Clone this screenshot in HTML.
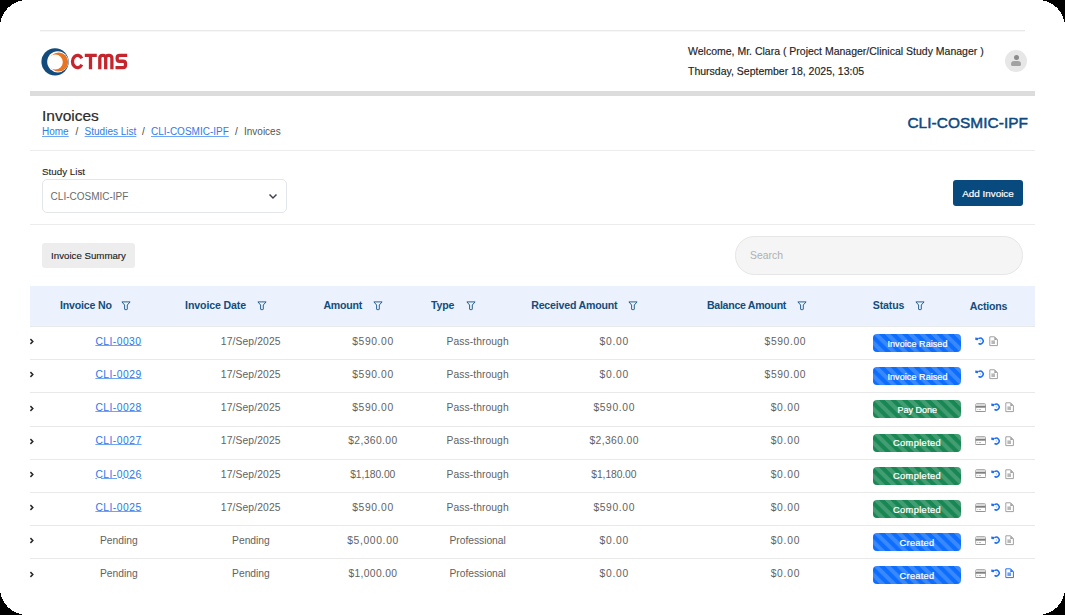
<!DOCTYPE html>
<html><head><meta charset="utf-8">
<style>
*{margin:0;padding:0;box-sizing:border-box}
html,body{width:1065px;height:615px;overflow:hidden;background:#000}
body{font-family:"Liberation Sans",sans-serif;color:#333}
#page{position:absolute;left:0;top:0;width:1065px;height:615px;background:#fff;overflow:hidden}
.a{position:absolute;white-space:nowrap}
.line{position:absolute;height:1px;background:#ececec}
.logo{position:absolute;left:40px;top:47px}
.hdr{font-size:10.5px;color:#222;-webkit-text-stroke:0.15px #222}
.crumb{font-size:10px;color:#555}
.crumb a{color:#2f7be6;text-decoration:underline;text-decoration-color:#6fa5f3;text-underline-offset:1px}
.crumb.sep{color:#444}
.th{position:absolute;top:286px;height:41px;left:30px;width:1005px;background:#ebf2fd;border-bottom:1px solid #e8eaea}
.thl{color:#134d7b}
.fil{position:absolute;top:301px;width:9px;height:9px}
.row{position:absolute;left:30px;width:1005px;height:34px;border-bottom:1px solid #e9e9e9}
.cell{color:#626262}
.lnk{color:#2a77ec;text-decoration:underline;text-decoration-color:#6fa5f3;text-underline-offset:0.4px}
.btxt{color:#fff;-webkit-text-stroke:0.22px #fff}
.badge{position:absolute;left:873px;width:88px;height:18px;border-radius:4px;
 background-image:linear-gradient(45deg,rgba(255,255,255,.18) 25%,transparent 25%,transparent 50%,rgba(255,255,255,.18) 50%,rgba(255,255,255,.18) 75%,transparent 75%,transparent);
 background-size:11.5px 11.5px;background-position:0.6px 0}
.blue{background-color:#0d6efd}
.green{background-color:#198754}
.ic{position:absolute}
</style></head>
<body>
<div id="page">
  <!-- header -->
  <div class="line" style="left:40px;top:30px;width:985px;background:#e9e9e9;box-shadow:0 1px 0 #f7f7f7"></div>
  <svg class="a" style="left:0;top:0" width="140" height="90" viewBox="0 0 140 90">
    <circle cx="55.05" cy="61.8" r="13.65" fill="#134b7d"/>
    <circle cx="57.8" cy="61.8" r="10.6" fill="#fff"/>
    <circle cx="58.65" cy="61.95" r="9.55" fill="#e97424"/>
    <circle cx="55.3" cy="61.95" r="7.5" fill="#fff"/>
    <g fill="none" stroke="#c5252d" stroke-width="3.3">
      <path d="M81.8 58.4 A5 6.15 0 1 0 81.8 64.6"/>
      <path d="M84.8 55.35 H96.8 M90.5 55.35 V69.3"/>
      <path d="M99.8 69.3 V58.3 Q99.8 55.35 102.6 55.35 H103 Q105.7 55.35 105.7 58.3 V69.3 M105.7 58.3 Q105.7 55.35 108.5 55.35 H109 Q111.9 55.35 111.9 58.3 V69.3"/>
      <path d="M127.2 55.35 H119.6 Q117.15 55.35 117.15 57.9 V58.7 Q117.15 61.25 119.6 61.25 H123 Q125.55 61.25 125.55 63.8 V65.1 Q125.55 67.65 123 67.65 H115.5"/>
    </g>
  </svg>
  <div class="a hdr" style="left:688px;top:45px">Welcome, Mr. Clara ( Project Manager/Clinical Study Manager )</div>
  <div class="a hdr" style="left:688px;top:65px">Thursday, September 18, 2025, 13:05</div>
  <div class="a" style="left:1005px;top:50px;width:22px;height:22px;border-radius:50%;background:#e7e7e7">
    <div style="position:absolute;left:8.5px;top:4.5px;width:5px;height:5px;border-radius:50%;background:#8c8c8c"></div>
    <div style="position:absolute;left:6px;top:11px;width:10px;height:5px;border-radius:5px 5px 3px 3px;background:#a2a2a2"></div>
  </div>
  <div class="a" style="left:30px;top:91px;width:1005px;height:5px;background:#dcdcdc"></div>

  <!-- title -->
  <div class="a" style="left:42px;top:107px;font-size:15.5px;color:#2b2b2b;-webkit-text-stroke:0.2px #2b2b2b">Invoices</div>
  <div class="a crumb" style="left:42px;top:126px"><a>Home</a></div>
  <div class="a crumb sep" style="left:75.5px;top:126px">/</div>
  <div class="a crumb" style="left:84.6px;top:126px"><a>Studies List</a></div>
  <div class="a crumb sep" style="left:142px;top:126px">/</div>
  <div class="a crumb" style="left:151px;top:126px"><a>CLI-COSMIC-IPF</a></div>
  <div class="a crumb sep" style="left:235px;top:126px">/</div>
  <div class="a crumb" style="left:244px;top:126px">Invoices</div>
  <div class="a" style="left:907.4px;top:114px;font-size:15.4px;font-weight:400;color:#0d4a80;letter-spacing:0.07px;-webkit-text-stroke:0.5px #0d4a80">CLI-COSMIC-IPF</div>
  <div class="line" style="left:30px;top:150px;width:1005px"></div>

  <!-- filter row -->
  <div class="a" style="left:42px;top:166px;font-size:9.8px;color:#262626;-webkit-text-stroke:0.12px #262626">Study List</div>
  <div class="a" style="left:42px;top:179px;width:245px;height:34px;border:1px solid #e2e5ea;border-radius:5px">
    <div class="a" style="left:7.6px;top:11px;font-size:10px;color:#6a6a6a">CLI-COSMIC-IPF</div>
    <svg class="ic" style="left:224.6px;top:12.6px" width="10" height="8" viewBox="0 0 10 8"><path d="M1.5 1.6 L5 5 L8.5 1.6" fill="none" stroke="#3d4350" stroke-width="1.45"/></svg>
  </div>
  <div class="a" style="left:953px;top:180px;width:70px;height:26px;border-radius:3px;background:#084a7e;color:#fff;font-size:9.9px;text-align:center;line-height:27.5px;-webkit-text-stroke:0.2px #fff">Add Invoice</div>
  <div class="line" style="left:30px;top:224px;width:1005px"></div>

  <!-- summary / search -->
  <div class="a" style="left:42px;top:243px;width:93px;height:25px;border-radius:3px;background:#ededed;color:#1a1a1a;-webkit-text-stroke:0.12px #1a1a1a;font-size:9.7px;text-align:center;line-height:25px">Invoice Summary</div>
  <div class="a" style="left:735px;top:236px;width:288px;height:38.5px;border-radius:19.25px;background:#f5f5f5;border:1px solid #e6e6e6">
    <div class="a" style="left:14px;top:13px;font-size:10.4px;color:#b0b0b0">Search</div>
  </div>

  <!-- table header -->
  <div class="th"></div>
  <div id="thead"><div class="a thl" style="left:59.90px;top:299.93px;font-size:10.6px;line-height:10.6px;font-weight:700;letter-spacing:-0.169px;">Invoice No</div>
<svg class="ic" style="left:120.69999999999999px;top:300px" width="10" height="11" viewBox="0 0 10 11"><path d="M0.9 1.9 H9.1 L6.3 5.0 V9.1 Q6.3 9.6 5.8 9.6 H4.1 Q3.6 9.6 3.6 9.1 V5.0 Z" fill="none" stroke="#1d5a8c" stroke-width="0.95" stroke-linejoin="round"/></svg>
<div class="a thl" style="left:185.10px;top:299.93px;font-size:10.6px;line-height:10.6px;font-weight:700;letter-spacing:-0.123px;">Invoice Date</div>
<svg class="ic" style="left:256.6px;top:300px" width="10" height="11" viewBox="0 0 10 11"><path d="M0.9 1.9 H9.1 L6.3 5.0 V9.1 Q6.3 9.6 5.8 9.6 H4.1 Q3.6 9.6 3.6 9.1 V5.0 Z" fill="none" stroke="#1d5a8c" stroke-width="0.95" stroke-linejoin="round"/></svg>
<div class="a thl" style="left:323.40px;top:299.93px;font-size:10.6px;line-height:10.6px;font-weight:700;letter-spacing:-0.241px;">Amount</div>
<svg class="ic" style="left:373.3px;top:300px" width="10" height="11" viewBox="0 0 10 11"><path d="M0.9 1.9 H9.1 L6.3 5.0 V9.1 Q6.3 9.6 5.8 9.6 H4.1 Q3.6 9.6 3.6 9.1 V5.0 Z" fill="none" stroke="#1d5a8c" stroke-width="0.95" stroke-linejoin="round"/></svg>
<div class="a thl" style="left:430.90px;top:299.93px;font-size:10.6px;line-height:10.6px;font-weight:700;letter-spacing:-0.119px;">Type</div>
<svg class="ic" style="left:465.6px;top:300px" width="10" height="11" viewBox="0 0 10 11"><path d="M0.9 1.9 H9.1 L6.3 5.0 V9.1 Q6.3 9.6 5.8 9.6 H4.1 Q3.6 9.6 3.6 9.1 V5.0 Z" fill="none" stroke="#1d5a8c" stroke-width="0.95" stroke-linejoin="round"/></svg>
<div class="a thl" style="left:531.20px;top:299.93px;font-size:10.6px;line-height:10.6px;font-weight:700;letter-spacing:-0.193px;">Received Amount</div>
<svg class="ic" style="left:627.8000000000001px;top:300px" width="10" height="11" viewBox="0 0 10 11"><path d="M0.9 1.9 H9.1 L6.3 5.0 V9.1 Q6.3 9.6 5.8 9.6 H4.1 Q3.6 9.6 3.6 9.1 V5.0 Z" fill="none" stroke="#1d5a8c" stroke-width="0.95" stroke-linejoin="round"/></svg>
<div class="a thl" style="left:707.00px;top:299.93px;font-size:10.6px;line-height:10.6px;font-weight:700;letter-spacing:-0.293px;">Balance Amount</div>
<svg class="ic" style="left:796.6px;top:300px" width="10" height="11" viewBox="0 0 10 11"><path d="M0.9 1.9 H9.1 L6.3 5.0 V9.1 Q6.3 9.6 5.8 9.6 H4.1 Q3.6 9.6 3.6 9.1 V5.0 Z" fill="none" stroke="#1d5a8c" stroke-width="0.95" stroke-linejoin="round"/></svg>
<div class="a thl" style="left:872.80px;top:299.93px;font-size:10.6px;line-height:10.6px;font-weight:700;letter-spacing:-0.140px;">Status</div>
<svg class="ic" style="left:915.0px;top:300px" width="10" height="11" viewBox="0 0 10 11"><path d="M0.9 1.9 H9.1 L6.3 5.0 V9.1 Q6.3 9.6 5.8 9.6 H4.1 Q3.6 9.6 3.6 9.1 V5.0 Z" fill="none" stroke="#1d5a8c" stroke-width="0.95" stroke-linejoin="round"/></svg>
<div class="a thl" style="left:969.80px;top:301.23px;font-size:10.6px;line-height:10.6px;font-weight:700;letter-spacing:-0.212px;">Actions</div>
<div class="row" style="top:327.00px;height:33.20px"></div>
<svg class="ic" style="left:29px;top:338.20px" width="6" height="7" viewBox="0 0 6 7"><path d="M1.4 1.1 L3.8 3.5 L1.4 5.9" fill="none" stroke="#262626" stroke-width="1.5"/></svg>
<div class="a cell lnk" style="left:95.40px;top:336.78px;font-size:10.3px;line-height:10.3px;font-weight:400;letter-spacing:0.465px;">CLI-0030</div>
<div class="a cell" style="left:220.85px;top:336.78px;font-size:10.3px;line-height:10.3px;font-weight:400;letter-spacing:0.121px;">17/Sep/2025</div>
<div class="a cell" style="left:352.25px;top:336.78px;font-size:10.3px;line-height:10.3px;font-weight:400;letter-spacing:0.616px;">$590.00</div>
<div class="a cell" style="left:446.60px;top:336.78px;font-size:10.3px;line-height:10.3px;font-weight:400;letter-spacing:0.070px;">Pass-through</div>
<div class="a cell" style="left:599.55px;top:336.78px;font-size:10.3px;line-height:10.3px;font-weight:400;letter-spacing:0.738px;">$0.00</div>
<div class="a cell" style="left:764.55px;top:336.78px;font-size:10.3px;line-height:10.3px;font-weight:400;letter-spacing:0.616px;">$590.00</div>
<div class="badge blue" style="top:334.00px"></div>
<div class="a btxt" style="left:887.45px;top:339.88px;font-size:9.0px;line-height:9.0px;font-weight:400;letter-spacing:0.075px;">Invoice Raised</div>
<svg class="ic" style="left:975.1px;top:336.00px" width="10" height="10" viewBox="0 0 10 10"><path d="M3.6 2.6 A2.95 2.95 0 1 1 3.5 7.46" fill="none" stroke="#1f6ff2" stroke-width="1.55"/><path d="M0.2 1.6 L3.9 1.9 L2.7 4.3 L0.4 4.1 Z" fill="#1f6ff2"/><path d="M5.3 4.0 V5.4 L6.1 6" fill="none" stroke="#1f6ff2" stroke-width="0.8" opacity="0.4"/></svg>
<svg class="ic" style="left:989.2px;top:335.80px" width="10" height="11" viewBox="0 0 10 11"><path d="M0.8 0.8 H5.6 L8.4 3.6 V9.6 H0.8 Z" fill="#fff" stroke="#a0a0a0" stroke-width="1" stroke-linejoin="round"/><path d="M5.3 0.8 V3.9 H8.4 Z" fill="#a0a0a0"/><rect x="2.4" y="4.4" width="3.6" height="3.6" fill="#b8b8b8"/></svg>
<div class="row" style="top:360.20px;height:33.20px"></div>
<svg class="ic" style="left:29px;top:371.40px" width="6" height="7" viewBox="0 0 6 7"><path d="M1.4 1.1 L3.8 3.5 L1.4 5.9" fill="none" stroke="#262626" stroke-width="1.5"/></svg>
<div class="a cell lnk" style="left:95.40px;top:369.98px;font-size:10.3px;line-height:10.3px;font-weight:400;letter-spacing:0.480px;">CLI-0029</div>
<div class="a cell" style="left:220.85px;top:369.98px;font-size:10.3px;line-height:10.3px;font-weight:400;letter-spacing:0.121px;">17/Sep/2025</div>
<div class="a cell" style="left:352.25px;top:369.98px;font-size:10.3px;line-height:10.3px;font-weight:400;letter-spacing:0.616px;">$590.00</div>
<div class="a cell" style="left:446.60px;top:369.98px;font-size:10.3px;line-height:10.3px;font-weight:400;letter-spacing:0.070px;">Pass-through</div>
<div class="a cell" style="left:599.55px;top:369.98px;font-size:10.3px;line-height:10.3px;font-weight:400;letter-spacing:0.738px;">$0.00</div>
<div class="a cell" style="left:764.55px;top:369.98px;font-size:10.3px;line-height:10.3px;font-weight:400;letter-spacing:0.616px;">$590.00</div>
<div class="badge blue" style="top:367.20px"></div>
<div class="a btxt" style="left:887.45px;top:373.08px;font-size:9.0px;line-height:9.0px;font-weight:400;letter-spacing:0.075px;">Invoice Raised</div>
<svg class="ic" style="left:975.1px;top:369.20px" width="10" height="10" viewBox="0 0 10 10"><path d="M3.6 2.6 A2.95 2.95 0 1 1 3.5 7.46" fill="none" stroke="#1f6ff2" stroke-width="1.55"/><path d="M0.2 1.6 L3.9 1.9 L2.7 4.3 L0.4 4.1 Z" fill="#1f6ff2"/><path d="M5.3 4.0 V5.4 L6.1 6" fill="none" stroke="#1f6ff2" stroke-width="0.8" opacity="0.4"/></svg>
<svg class="ic" style="left:989.2px;top:369.00px" width="10" height="11" viewBox="0 0 10 11"><path d="M0.8 0.8 H5.6 L8.4 3.6 V9.6 H0.8 Z" fill="#fff" stroke="#a0a0a0" stroke-width="1" stroke-linejoin="round"/><path d="M5.3 0.8 V3.9 H8.4 Z" fill="#a0a0a0"/><rect x="2.4" y="4.4" width="3.6" height="3.6" fill="#b8b8b8"/></svg>
<div class="row" style="top:393.40px;height:33.20px"></div>
<svg class="ic" style="left:29px;top:404.60px" width="6" height="7" viewBox="0 0 6 7"><path d="M1.4 1.1 L3.8 3.5 L1.4 5.9" fill="none" stroke="#262626" stroke-width="1.5"/></svg>
<div class="a cell lnk" style="left:95.40px;top:403.18px;font-size:10.3px;line-height:10.3px;font-weight:400;letter-spacing:0.480px;">CLI-0028</div>
<div class="a cell" style="left:220.85px;top:403.18px;font-size:10.3px;line-height:10.3px;font-weight:400;letter-spacing:0.121px;">17/Sep/2025</div>
<div class="a cell" style="left:352.25px;top:403.18px;font-size:10.3px;line-height:10.3px;font-weight:400;letter-spacing:0.616px;">$590.00</div>
<div class="a cell" style="left:446.60px;top:403.18px;font-size:10.3px;line-height:10.3px;font-weight:400;letter-spacing:0.070px;">Pass-through</div>
<div class="a cell" style="left:593.45px;top:403.18px;font-size:10.3px;line-height:10.3px;font-weight:400;letter-spacing:0.616px;">$590.00</div>
<div class="a cell" style="left:770.65px;top:403.18px;font-size:10.3px;line-height:10.3px;font-weight:400;letter-spacing:0.738px;">$0.00</div>
<div class="badge green" style="top:400.40px"></div>
<div class="a btxt" style="left:897.45px;top:406.28px;font-size:9.0px;line-height:9.0px;font-weight:400;letter-spacing:-0.003px;">Pay Done</div>
<svg class="ic" style="left:975px;top:403.00px" width="11" height="9" viewBox="0 0 11 9"><rect x="0.7" y="0.6" width="9.8" height="8" rx="0.9" fill="#fff" stroke="#a8a8a8" stroke-width="1"/><rect x="1.2" y="1.1" width="8.8" height="1.9" fill="#d6d6d6"/><rect x="0.7" y="3" width="9.8" height="1.7" fill="#7f7f7f"/><rect x="2" y="6.1" width="1.3" height="1" fill="#ccc"/><rect x="4" y="6.1" width="2" height="1" fill="#bbb"/><path d="M0.7 8.6 H10.5" stroke="#8c8c8c" stroke-width="0.9"/></svg>
<svg class="ic" style="left:990.9px;top:402.40px" width="10" height="10" viewBox="0 0 10 10"><path d="M3.6 2.6 A2.95 2.95 0 1 1 3.5 7.46" fill="none" stroke="#1f6ff2" stroke-width="1.55"/><path d="M0.2 1.6 L3.9 1.9 L2.7 4.3 L0.4 4.1 Z" fill="#1f6ff2"/><path d="M5.3 4.0 V5.4 L6.1 6" fill="none" stroke="#1f6ff2" stroke-width="0.8" opacity="0.4"/></svg>
<svg class="ic" style="left:1004.8px;top:402.40px" width="10" height="11" viewBox="0 0 10 11"><path d="M0.8 0.8 H5.6 L8.4 3.6 V9.6 H0.8 Z" fill="#fff" stroke="#a0a0a0" stroke-width="1" stroke-linejoin="round"/><path d="M5.3 0.8 V3.9 H8.4 Z" fill="#a0a0a0"/><rect x="2.4" y="4.4" width="3.6" height="3.6" fill="#b8b8b8"/></svg>
<div class="row" style="top:426.60px;height:33.20px"></div>
<svg class="ic" style="left:29px;top:437.80px" width="6" height="7" viewBox="0 0 6 7"><path d="M1.4 1.1 L3.8 3.5 L1.4 5.9" fill="none" stroke="#262626" stroke-width="1.5"/></svg>
<div class="a cell lnk" style="left:95.40px;top:436.38px;font-size:10.3px;line-height:10.3px;font-weight:400;letter-spacing:0.480px;">CLI-0027</div>
<div class="a cell" style="left:220.85px;top:436.38px;font-size:10.3px;line-height:10.3px;font-weight:400;letter-spacing:0.121px;">17/Sep/2025</div>
<div class="a cell" style="left:348.20px;top:436.38px;font-size:10.3px;line-height:10.3px;font-weight:400;letter-spacing:0.401px;">$2,360.00</div>
<div class="a cell" style="left:446.60px;top:436.38px;font-size:10.3px;line-height:10.3px;font-weight:400;letter-spacing:0.070px;">Pass-through</div>
<div class="a cell" style="left:589.40px;top:436.38px;font-size:10.3px;line-height:10.3px;font-weight:400;letter-spacing:0.401px;">$2,360.00</div>
<div class="a cell" style="left:770.65px;top:436.38px;font-size:10.3px;line-height:10.3px;font-weight:400;letter-spacing:0.738px;">$0.00</div>
<div class="badge green" style="top:433.60px"></div>
<div class="a btxt" style="left:893.00px;top:439.23px;font-size:9.3px;line-height:9.3px;font-weight:400;letter-spacing:0.350px;">Completed</div>
<svg class="ic" style="left:975px;top:436.20px" width="11" height="9" viewBox="0 0 11 9"><rect x="0.7" y="0.6" width="9.8" height="8" rx="0.9" fill="#fff" stroke="#a8a8a8" stroke-width="1"/><rect x="1.2" y="1.1" width="8.8" height="1.9" fill="#d6d6d6"/><rect x="0.7" y="3" width="9.8" height="1.7" fill="#7f7f7f"/><rect x="2" y="6.1" width="1.3" height="1" fill="#ccc"/><rect x="4" y="6.1" width="2" height="1" fill="#bbb"/><path d="M0.7 8.6 H10.5" stroke="#8c8c8c" stroke-width="0.9"/></svg>
<svg class="ic" style="left:990.9px;top:435.60px" width="10" height="10" viewBox="0 0 10 10"><path d="M3.6 2.6 A2.95 2.95 0 1 1 3.5 7.46" fill="none" stroke="#1f6ff2" stroke-width="1.55"/><path d="M0.2 1.6 L3.9 1.9 L2.7 4.3 L0.4 4.1 Z" fill="#1f6ff2"/><path d="M5.3 4.0 V5.4 L6.1 6" fill="none" stroke="#1f6ff2" stroke-width="0.8" opacity="0.4"/></svg>
<svg class="ic" style="left:1004.8px;top:435.60px" width="10" height="11" viewBox="0 0 10 11"><path d="M0.8 0.8 H5.6 L8.4 3.6 V9.6 H0.8 Z" fill="#fff" stroke="#a0a0a0" stroke-width="1" stroke-linejoin="round"/><path d="M5.3 0.8 V3.9 H8.4 Z" fill="#a0a0a0"/><rect x="2.4" y="4.4" width="3.6" height="3.6" fill="#b8b8b8"/></svg>
<div class="row" style="top:459.80px;height:33.20px"></div>
<svg class="ic" style="left:29px;top:471.00px" width="6" height="7" viewBox="0 0 6 7"><path d="M1.4 1.1 L3.8 3.5 L1.4 5.9" fill="none" stroke="#262626" stroke-width="1.5"/></svg>
<div class="a cell lnk" style="left:95.40px;top:469.58px;font-size:10.3px;line-height:10.3px;font-weight:400;letter-spacing:0.480px;">CLI-0026</div>
<div class="a cell" style="left:220.85px;top:469.58px;font-size:10.3px;line-height:10.3px;font-weight:400;letter-spacing:0.121px;">17/Sep/2025</div>
<div class="a cell" style="left:350.15px;top:469.58px;font-size:10.3px;line-height:10.3px;font-weight:400;letter-spacing:-0.087px;">$1,180.00</div>
<div class="a cell" style="left:446.60px;top:469.58px;font-size:10.3px;line-height:10.3px;font-weight:400;letter-spacing:0.070px;">Pass-through</div>
<div class="a cell" style="left:591.35px;top:469.58px;font-size:10.3px;line-height:10.3px;font-weight:400;letter-spacing:-0.087px;">$1,180.00</div>
<div class="a cell" style="left:770.65px;top:469.58px;font-size:10.3px;line-height:10.3px;font-weight:400;letter-spacing:0.738px;">$0.00</div>
<div class="badge green" style="top:466.80px"></div>
<div class="a btxt" style="left:893.00px;top:472.43px;font-size:9.3px;line-height:9.3px;font-weight:400;letter-spacing:0.350px;">Completed</div>
<svg class="ic" style="left:975px;top:469.40px" width="11" height="9" viewBox="0 0 11 9"><rect x="0.7" y="0.6" width="9.8" height="8" rx="0.9" fill="#fff" stroke="#a8a8a8" stroke-width="1"/><rect x="1.2" y="1.1" width="8.8" height="1.9" fill="#d6d6d6"/><rect x="0.7" y="3" width="9.8" height="1.7" fill="#7f7f7f"/><rect x="2" y="6.1" width="1.3" height="1" fill="#ccc"/><rect x="4" y="6.1" width="2" height="1" fill="#bbb"/><path d="M0.7 8.6 H10.5" stroke="#8c8c8c" stroke-width="0.9"/></svg>
<svg class="ic" style="left:990.9px;top:468.80px" width="10" height="10" viewBox="0 0 10 10"><path d="M3.6 2.6 A2.95 2.95 0 1 1 3.5 7.46" fill="none" stroke="#1f6ff2" stroke-width="1.55"/><path d="M0.2 1.6 L3.9 1.9 L2.7 4.3 L0.4 4.1 Z" fill="#1f6ff2"/><path d="M5.3 4.0 V5.4 L6.1 6" fill="none" stroke="#1f6ff2" stroke-width="0.8" opacity="0.4"/></svg>
<svg class="ic" style="left:1004.8px;top:468.80px" width="10" height="11" viewBox="0 0 10 11"><path d="M0.8 0.8 H5.6 L8.4 3.6 V9.6 H0.8 Z" fill="#fff" stroke="#a0a0a0" stroke-width="1" stroke-linejoin="round"/><path d="M5.3 0.8 V3.9 H8.4 Z" fill="#a0a0a0"/><rect x="2.4" y="4.4" width="3.6" height="3.6" fill="#b8b8b8"/></svg>
<div class="row" style="top:493.00px;height:33.20px"></div>
<svg class="ic" style="left:29px;top:504.20px" width="6" height="7" viewBox="0 0 6 7"><path d="M1.4 1.1 L3.8 3.5 L1.4 5.9" fill="none" stroke="#262626" stroke-width="1.5"/></svg>
<div class="a cell lnk" style="left:95.40px;top:502.78px;font-size:10.3px;line-height:10.3px;font-weight:400;letter-spacing:0.480px;">CLI-0025</div>
<div class="a cell" style="left:220.85px;top:502.78px;font-size:10.3px;line-height:10.3px;font-weight:400;letter-spacing:0.121px;">17/Sep/2025</div>
<div class="a cell" style="left:352.25px;top:502.78px;font-size:10.3px;line-height:10.3px;font-weight:400;letter-spacing:0.616px;">$590.00</div>
<div class="a cell" style="left:446.60px;top:502.78px;font-size:10.3px;line-height:10.3px;font-weight:400;letter-spacing:0.070px;">Pass-through</div>
<div class="a cell" style="left:593.45px;top:502.78px;font-size:10.3px;line-height:10.3px;font-weight:400;letter-spacing:0.616px;">$590.00</div>
<div class="a cell" style="left:770.65px;top:502.78px;font-size:10.3px;line-height:10.3px;font-weight:400;letter-spacing:0.738px;">$0.00</div>
<div class="badge green" style="top:500.00px"></div>
<div class="a btxt" style="left:893.00px;top:505.63px;font-size:9.3px;line-height:9.3px;font-weight:400;letter-spacing:0.350px;">Completed</div>
<svg class="ic" style="left:975px;top:502.60px" width="11" height="9" viewBox="0 0 11 9"><rect x="0.7" y="0.6" width="9.8" height="8" rx="0.9" fill="#fff" stroke="#a8a8a8" stroke-width="1"/><rect x="1.2" y="1.1" width="8.8" height="1.9" fill="#d6d6d6"/><rect x="0.7" y="3" width="9.8" height="1.7" fill="#7f7f7f"/><rect x="2" y="6.1" width="1.3" height="1" fill="#ccc"/><rect x="4" y="6.1" width="2" height="1" fill="#bbb"/><path d="M0.7 8.6 H10.5" stroke="#8c8c8c" stroke-width="0.9"/></svg>
<svg class="ic" style="left:990.9px;top:502.00px" width="10" height="10" viewBox="0 0 10 10"><path d="M3.6 2.6 A2.95 2.95 0 1 1 3.5 7.46" fill="none" stroke="#1f6ff2" stroke-width="1.55"/><path d="M0.2 1.6 L3.9 1.9 L2.7 4.3 L0.4 4.1 Z" fill="#1f6ff2"/><path d="M5.3 4.0 V5.4 L6.1 6" fill="none" stroke="#1f6ff2" stroke-width="0.8" opacity="0.4"/></svg>
<svg class="ic" style="left:1004.8px;top:502.00px" width="10" height="11" viewBox="0 0 10 11"><path d="M0.8 0.8 H5.6 L8.4 3.6 V9.6 H0.8 Z" fill="#fff" stroke="#a0a0a0" stroke-width="1" stroke-linejoin="round"/><path d="M5.3 0.8 V3.9 H8.4 Z" fill="#a0a0a0"/><rect x="2.4" y="4.4" width="3.6" height="3.6" fill="#b8b8b8"/></svg>
<div class="row" style="top:526.20px;height:33.20px"></div>
<svg class="ic" style="left:29px;top:537.40px" width="6" height="7" viewBox="0 0 6 7"><path d="M1.4 1.1 L3.8 3.5 L1.4 5.9" fill="none" stroke="#262626" stroke-width="1.5"/></svg>
<div class="a cell" style="left:100.00px;top:535.98px;font-size:10.3px;line-height:10.3px;font-weight:400;letter-spacing:-0.029px;">Pending</div>
<div class="a cell" style="left:232.10px;top:535.98px;font-size:10.3px;line-height:10.3px;font-weight:400;letter-spacing:-0.029px;">Pending</div>
<div class="a cell" style="left:347.15px;top:535.98px;font-size:10.3px;line-height:10.3px;font-weight:400;letter-spacing:0.663px;">$5,000.00</div>
<div class="a cell" style="left:449.45px;top:535.98px;font-size:10.3px;line-height:10.3px;font-weight:400;letter-spacing:-0.027px;">Professional</div>
<div class="a cell" style="left:599.55px;top:535.98px;font-size:10.3px;line-height:10.3px;font-weight:400;letter-spacing:0.738px;">$0.00</div>
<div class="a cell" style="left:770.65px;top:535.98px;font-size:10.3px;line-height:10.3px;font-weight:400;letter-spacing:0.738px;">$0.00</div>
<div class="badge blue" style="top:533.20px"></div>
<div class="a btxt" style="left:899.55px;top:538.83px;font-size:9.3px;line-height:9.3px;font-weight:400;letter-spacing:0.264px;">Created</div>
<svg class="ic" style="left:975px;top:535.80px" width="11" height="9" viewBox="0 0 11 9"><rect x="0.7" y="0.6" width="9.8" height="8" rx="0.9" fill="#fff" stroke="#a8a8a8" stroke-width="1"/><rect x="1.2" y="1.1" width="8.8" height="1.9" fill="#d6d6d6"/><rect x="0.7" y="3" width="9.8" height="1.7" fill="#7f7f7f"/><rect x="2" y="6.1" width="1.3" height="1" fill="#ccc"/><rect x="4" y="6.1" width="2" height="1" fill="#bbb"/><path d="M0.7 8.6 H10.5" stroke="#8c8c8c" stroke-width="0.9"/></svg>
<svg class="ic" style="left:990.9px;top:535.20px" width="10" height="10" viewBox="0 0 10 10"><path d="M3.6 2.6 A2.95 2.95 0 1 1 3.5 7.46" fill="none" stroke="#1f6ff2" stroke-width="1.55"/><path d="M0.2 1.6 L3.9 1.9 L2.7 4.3 L0.4 4.1 Z" fill="#1f6ff2"/><path d="M5.3 4.0 V5.4 L6.1 6" fill="none" stroke="#1f6ff2" stroke-width="0.8" opacity="0.4"/></svg>
<svg class="ic" style="left:1004.8px;top:535.20px" width="10" height="11" viewBox="0 0 10 11"><path d="M0.8 0.8 H5.6 L8.4 3.6 V9.6 H0.8 Z" fill="#fff" stroke="#a0a0a0" stroke-width="1" stroke-linejoin="round"/><path d="M5.3 0.8 V3.9 H8.4 Z" fill="#a0a0a0"/><rect x="2.4" y="4.4" width="3.6" height="3.6" fill="#b8b8b8"/></svg>
<div class="row" style="top:559.40px;height:33.20px;border-bottom:none"></div>
<svg class="ic" style="left:29px;top:570.60px" width="6" height="7" viewBox="0 0 6 7"><path d="M1.4 1.1 L3.8 3.5 L1.4 5.9" fill="none" stroke="#262626" stroke-width="1.5"/></svg>
<div class="a cell" style="left:100.00px;top:569.18px;font-size:10.3px;line-height:10.3px;font-weight:400;letter-spacing:-0.029px;">Pending</div>
<div class="a cell" style="left:232.10px;top:569.18px;font-size:10.3px;line-height:10.3px;font-weight:400;letter-spacing:-0.029px;">Pending</div>
<div class="a cell" style="left:348.40px;top:569.18px;font-size:10.3px;line-height:10.3px;font-weight:400;letter-spacing:0.351px;">$1,000.00</div>
<div class="a cell" style="left:449.45px;top:569.18px;font-size:10.3px;line-height:10.3px;font-weight:400;letter-spacing:-0.027px;">Professional</div>
<div class="a cell" style="left:599.55px;top:569.18px;font-size:10.3px;line-height:10.3px;font-weight:400;letter-spacing:0.738px;">$0.00</div>
<div class="a cell" style="left:770.65px;top:569.18px;font-size:10.3px;line-height:10.3px;font-weight:400;letter-spacing:0.738px;">$0.00</div>
<div class="badge blue" style="top:566.40px"></div>
<div class="a btxt" style="left:899.55px;top:572.03px;font-size:9.3px;line-height:9.3px;font-weight:400;letter-spacing:0.264px;">Created</div>
<svg class="ic" style="left:975px;top:569.00px" width="11" height="9" viewBox="0 0 11 9"><rect x="0.7" y="0.6" width="9.8" height="8" rx="0.9" fill="#fff" stroke="#a8a8a8" stroke-width="1"/><rect x="1.2" y="1.1" width="8.8" height="1.9" fill="#d6d6d6"/><rect x="0.7" y="3" width="9.8" height="1.7" fill="#7f7f7f"/><rect x="2" y="6.1" width="1.3" height="1" fill="#ccc"/><rect x="4" y="6.1" width="2" height="1" fill="#bbb"/><path d="M0.7 8.6 H10.5" stroke="#8c8c8c" stroke-width="0.9"/></svg>
<svg class="ic" style="left:990.9px;top:568.40px" width="10" height="10" viewBox="0 0 10 10"><path d="M3.6 2.6 A2.95 2.95 0 1 1 3.5 7.46" fill="none" stroke="#1f6ff2" stroke-width="1.55"/><path d="M0.2 1.6 L3.9 1.9 L2.7 4.3 L0.4 4.1 Z" fill="#1f6ff2"/><path d="M5.3 4.0 V5.4 L6.1 6" fill="none" stroke="#1f6ff2" stroke-width="0.8" opacity="0.4"/></svg>
<svg class="ic" style="left:1004.8px;top:568.40px" width="10" height="11" viewBox="0 0 10 11"><path d="M0.8 0.8 H5.6 L8.4 3.6 V9.6 H0.8 Z" fill="#fff" stroke="#2a72f0" stroke-width="1" stroke-linejoin="round"/><path d="M5.3 0.8 V3.9 H8.4 Z" fill="#2a72f0"/><rect x="2.4" y="4.4" width="3.6" height="3.6" fill="#6f9ff5"/></svg></div>
  <div id="tbody"></div>
<svg class="a" style="left:0;top:0;z-index:10" width="1065" height="615" viewBox="0 0 1065 615" shape-rendering="crispEdges">
  <path fill="#000" d="M0 0 H27 A27 27 0 0 0 0 27 Z M1065 0 V27 A27 27 0 0 0 1038 0 Z M0 615 V588 A27 27 0 0 0 27 615 Z M1065 615 H1038 A27 27 0 0 0 1065 588 Z"/>
</svg>
</div>
</body></html>
